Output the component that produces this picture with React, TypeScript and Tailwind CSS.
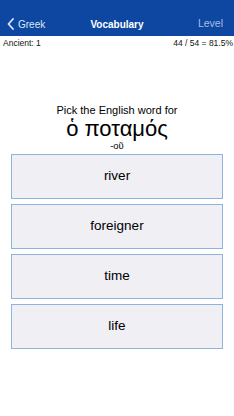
import React from "react";

const options = ["river", "foreigner", "time", "life"];

export default function App() {
  return (
    <div className="w-[234px] h-[416px] bg-white overflow-hidden" style={{ fontFamily: '"Liberation Sans", Arial, sans-serif' }}>
      <div className="h-[36px] bg-[#0d47a1] flex items-center pt-[12px] px-[7px] relative text-[10px]">
        <div className="flex items-center gap-[4px] text-[#dce6f5]">
          <svg width="7" height="12" viewBox="0 0 7 12" fill="none">
            <path d="M6 1L1.5 6L6 11" stroke="#dce6f5" strokeWidth="1.8" strokeLinecap="round" strokeLinejoin="round" />
          </svg>
          <span>Greek</span>
        </div>
        <div className="absolute left-0 right-0 top-[12px] bottom-0 flex items-center justify-center font-bold text-white pointer-events-none">Vocabulary</div>
        <div className="ml-auto mr-[4px] text-[#a9bfe4] text-[10.5px]">Level</div>
      </div>
      <div className="flex justify-between pl-[3px] pr-[1px] pt-[2px] text-[8.5px] text-[#111] leading-[11px]">
        <span>Ancient: 1</span>
        <span>44 / 54 = 81.5%</span>
      </div>
      <div className="flex flex-col items-center mt-[55px] text-black">
        <div className="text-[11px] leading-[13px]">Pick the English word for</div>
        <div className="text-[22px] leading-[24px]">ὁ ποταμός</div>
        <div className="text-[9.5px] leading-[11px] mt-[-1px]">-οῦ</div>
      </div>
      <div className="flex flex-col gap-[5px] px-[11px] mt-[3px]">
        {options.map((o) => (
          <div key={o} className="h-[45px] border border-[#8fb3df] bg-[#efeff4] flex items-center justify-center text-[13.5px] text-black">
            {o}
          </div>
        ))}
      </div>
    </div>
  );
}
